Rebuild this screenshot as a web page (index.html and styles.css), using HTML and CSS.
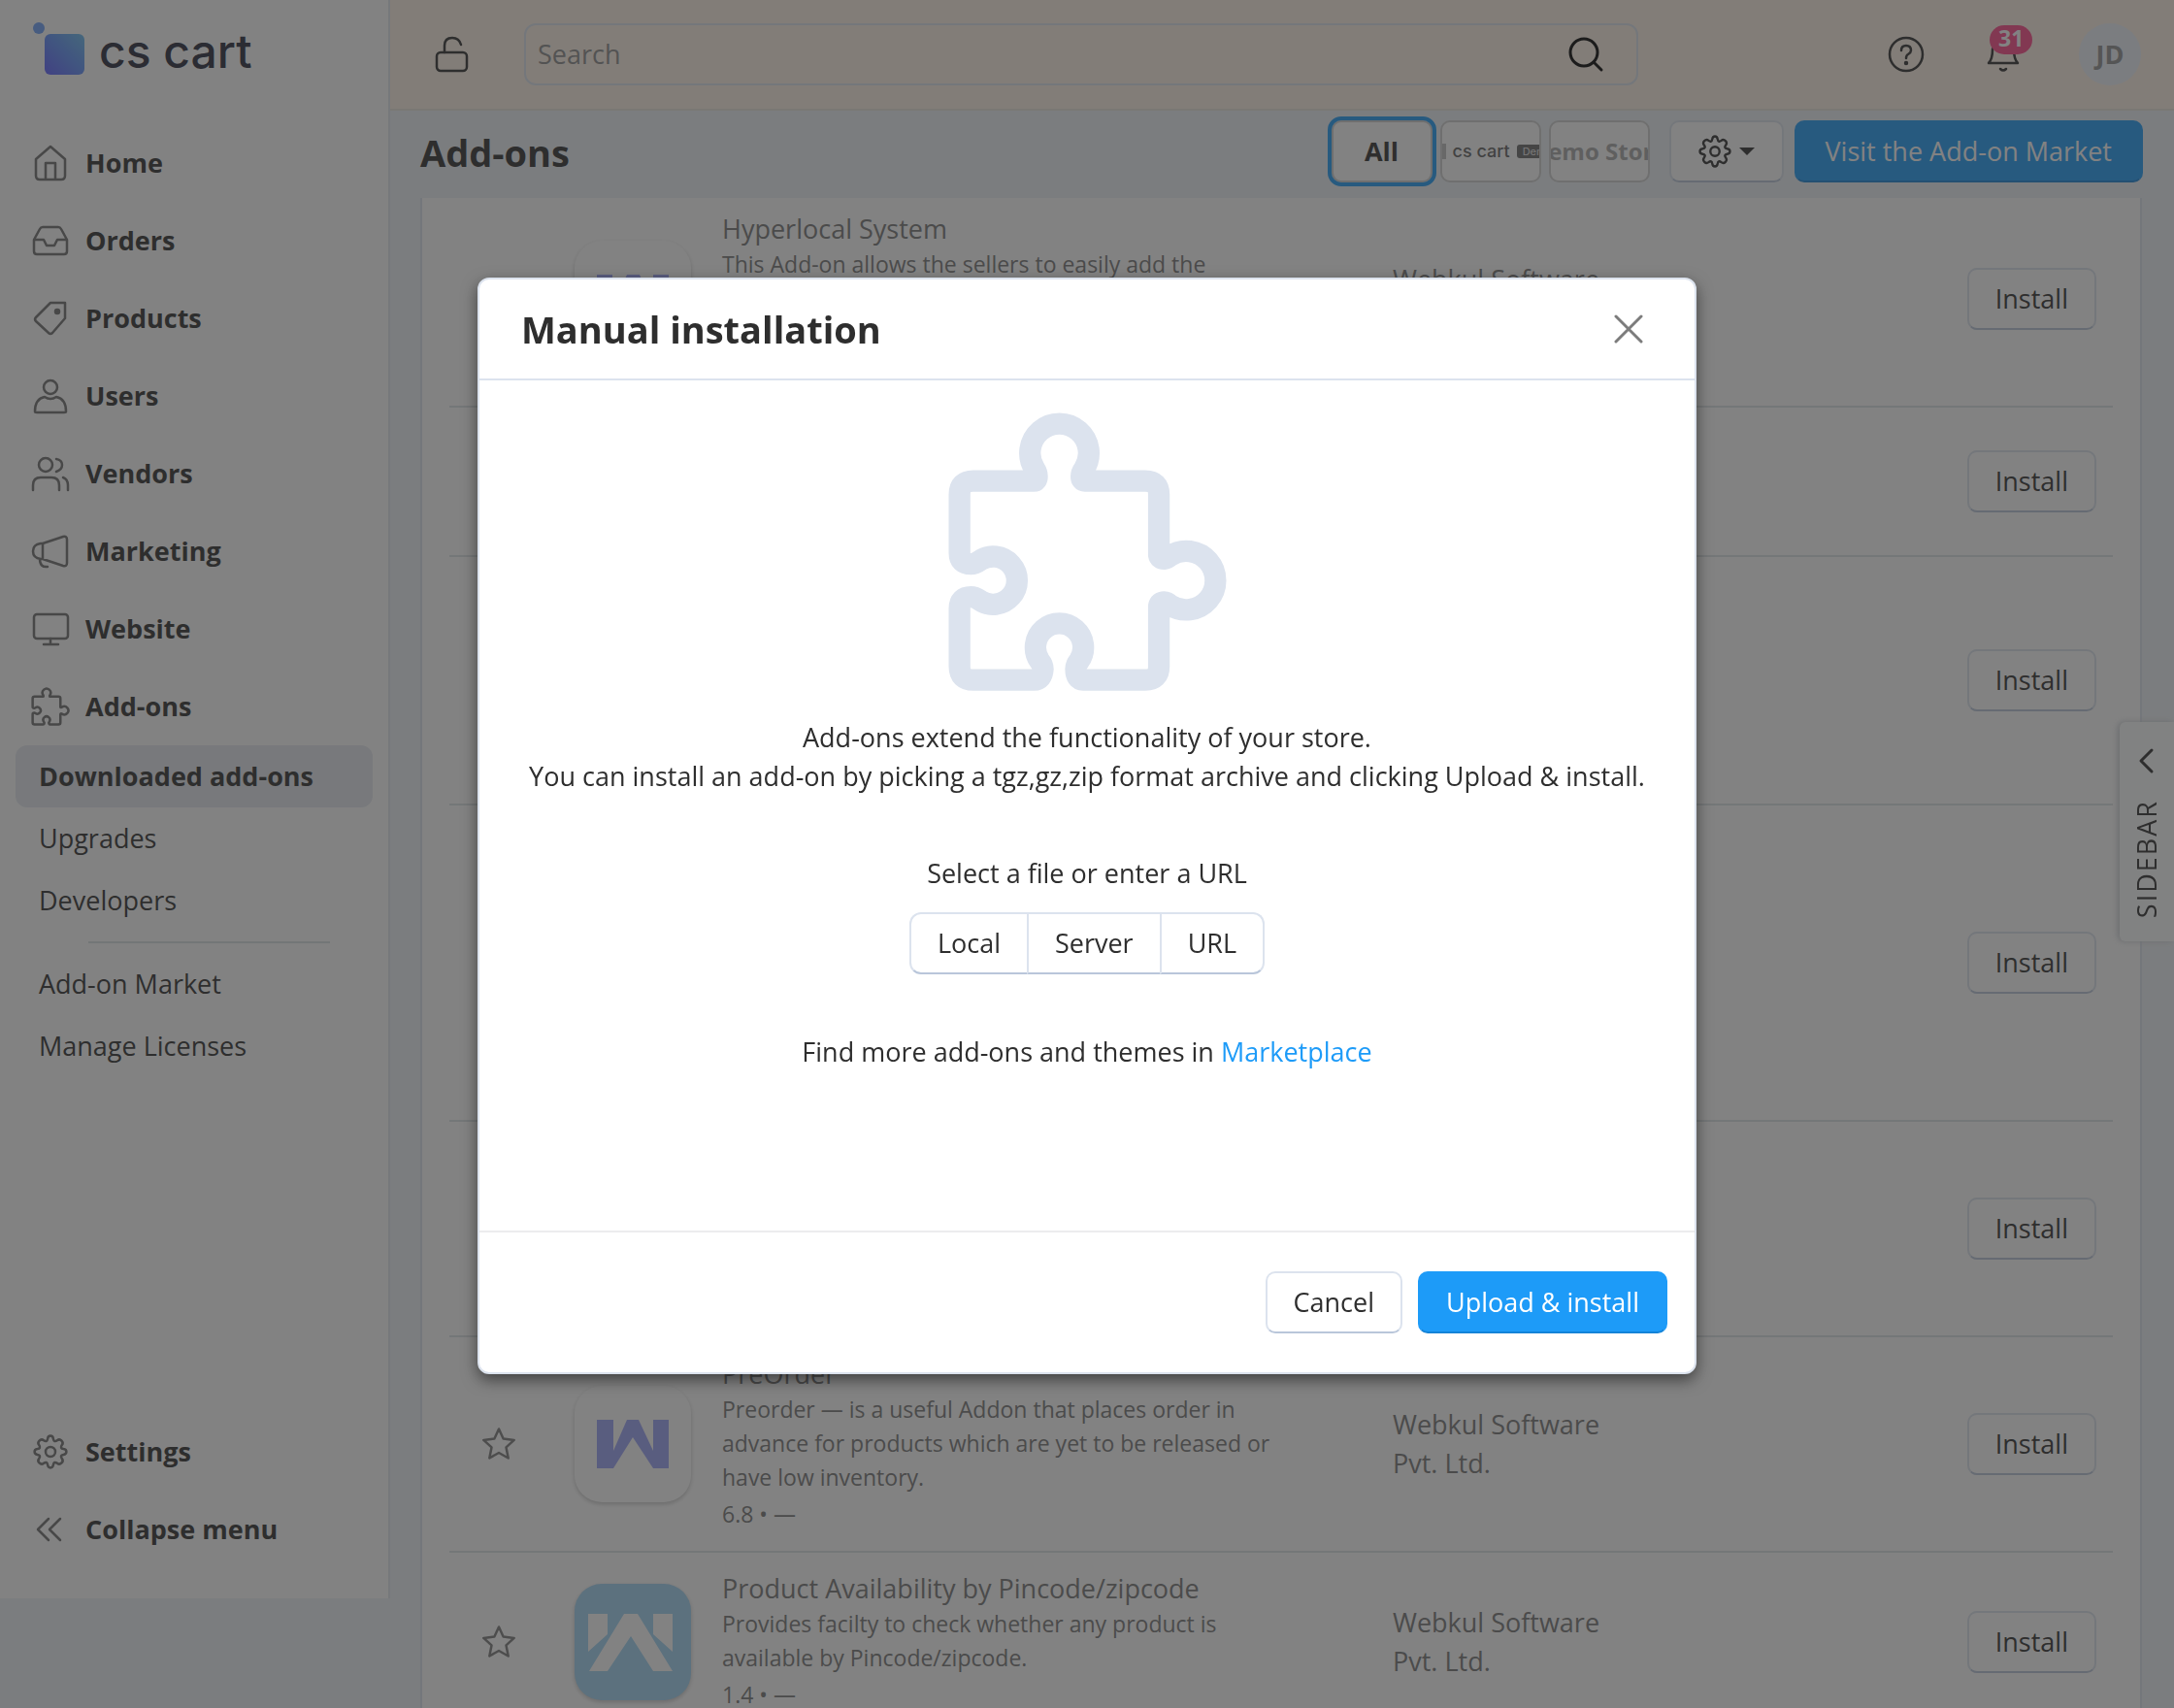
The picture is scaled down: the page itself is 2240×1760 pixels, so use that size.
FILE: index.html
```html
<!DOCTYPE html>
<html lang="en">
<head>
<meta charset="utf-8">
<meta name="viewport" content="width=device-width, initial-scale=1">
<title>Add-ons</title>
<link rel="stylesheet" href="styles.css">
</head>
<body>
<svg class="sprite" aria-hidden="true">
  <symbol id="puzzle" viewBox="233 74 860 862">
    <path d="M310 286H497Q507 286 507 272Q507 261 500 250A91 91 0 1 1 652 250Q644 261 644 272Q644 286 655 286H842Q884 286 884 328V515Q886 527 900 527Q910 526 918 518A91 91 0 1 1 918 670Q910 661 900 661Q886 661 884 674V860Q884 902 842 902H650Q627 902 627 868Q627 855 637 843A74 74 0 1 0 515 843Q525 855 525 868Q523 902 497 902H310Q267 902 267 860V680Q267 645 302 645Q315 645 329 655A74 74 0 1 0 329 533Q315 543 302 543Q267 543 267 510V328Q267 286 310 286Z"/>
  </symbol>
  <symbol id="gear" viewBox="0 0 36 36">
    <path d="M15.1 4.6C15.6 .6 20.4 .6 20.9 4.6C21.3 7.2 22.8 7.8 24.9 6.2C28.1 3.7 32.3 7.9 29.8 11.1C28.2 13.2 28.8 14.7 31.4 15.1C35.4 15.6 35.4 20.4 31.4 20.9C28.8 21.3 28.2 22.8 29.8 24.9C32.3 28.1 28.1 32.3 24.9 29.8C22.8 28.2 21.3 28.8 20.9 31.4C20.4 35.4 15.6 35.4 15.1 31.4C14.7 28.8 13.2 28.2 11.1 29.8C7.9 32.3 3.7 28.1 6.2 24.9C7.8 22.8 7.2 21.3 4.6 20.9C.6 20.4 .6 15.6 4.6 15.1C7.2 14.7 7.8 13.2 6.2 11.1C3.7 7.9 7.9 3.7 11.1 6.2C13.2 7.8 14.7 7.2 15.1 4.6Z"/>
    <circle cx="18" cy="18" r="5"/>
  </symbol>
  <symbol id="star" viewBox="0 0 36 36">
    <path d="M18 2.5L22.6 12.6L33.7 13.9L25.5 21.4L27.7 32.5L18 27L8.3 32.5L10.5 21.4L2.3 13.9L13.4 12.6Z"/>
  </symbol>
</svg>

<div class="shell">
  <aside class="sidebar">
    <a class="logo" href="#">
      <svg class="logo-mark" viewBox="0 0 66 56" aria-hidden="true">
        <defs><linearGradient id="mark" x1="0" y1="1" x2="1" y2="0"><stop offset="0" stop-color="#5e5cff"/><stop offset=".5" stop-color="#5c8dfa"/><stop offset="1" stop-color="#68bcee"/></linearGradient></defs>
        <circle cx="6" cy="7" r="6" fill="#6ba0fa"/><rect x="12" y="13" width="41" height="42" rx="6" fill="url(#mark)"/>
      </svg>
      <span>cs cart</span>
    </a>
    <nav class="menu">
      <a class="menu-item" href="#"><svg class="icon" viewBox="0 0 40 40"><path d="M5 16L20 3L35 16V33Q35 37 31 37H9Q5 37 5 33ZM15 37V20H25V37"/></svg>Home</a>
      <a class="menu-item" href="#"><svg class="icon" viewBox="0 0 40 40"><path d="M3 19L9 8Q10 6 12 6H28Q30 6 31 8L37 19V31Q37 34 34 34H6Q3 34 3 31ZM3 19H13L16 25H24L27 19H37"/></svg>Orders</a>
      <a class="menu-item" href="#"><svg class="icon" viewBox="0 0 40 40"><path d="M20 4H35V20L22 35Q20 37 18 35L5 23Q3 21 5 19Z"/><circle class="dot" cx="27" cy="13" r="2"/></svg>Products</a>
      <a class="menu-item" href="#"><svg class="icon" viewBox="0 0 40 40"><circle cx="20" cy="11" r="7"/><path d="M4 36Q4 23 14 21Q20 25 26 21Q36 23 36 36Q36 37 34 37H6Q4 37 4 36Z"/></svg>Users</a>
      <a class="menu-item" href="#"><svg class="icon" viewBox="0 0 40 40"><circle cx="15" cy="11" r="7"/><path d="M2 37V32Q2 24 10 24H21Q29 24 29 32V37M26 5Q32 6 32 11Q32 16 26 18M33 24Q38 26 38 32V37"/></svg>Vendors</a>
      <a class="menu-item" href="#"><svg class="icon" viewBox="0 0 40 40"><path d="M12 12L33 5Q37 4 37 8V32Q37 36 33 35L12 28H10Q2 27 2 20Q2 13 10 12ZM12 12V28M9 28Q9 37 17 36"/></svg>Marketing</a>
      <a class="menu-item" href="#"><svg class="icon" viewBox="0 0 40 40"><rect x="3" y="5" width="35" height="25" rx="3"/><path d="M20 30V36M13 36H28"/></svg>Website</a>
      <a class="menu-item" href="#"><svg class="icon icon-puzzle"><use href="#puzzle"/></svg>Add-ons</a>
      <div class="submenu">
        <a class="active" href="#">Downloaded add-ons</a>
        <a href="#">Upgrades</a>
        <a href="#">Developers</a>
        <hr>
        <a href="#">Add-on Market</a>
        <a href="#">Manage Licenses</a>
      </div>
    </nav>
    <div class="menu menu-bottom">
      <a class="menu-item" href="#"><svg class="icon icon-gear"><use href="#gear"/></svg>Settings</a>
      <a class="menu-item" href="#"><svg class="icon" viewBox="0 0 40 40"><path d="M18 9L7 20L18 31M30 9L19 20L30 31"/></svg>Collapse menu</a>
    </div>
  </aside>

  <div class="page">
    <header class="topbar">
      <button class="icon-button" aria-label="Store access"><svg class="icon" viewBox="0 0 40 40"><rect x="4" y="18" width="31" height="19" rx="4"/><path d="M12 18V11Q12 3 20 3Q27 3 29 10"/></svg></button>
      <div class="search">
        <input type="search" placeholder="Search" aria-label="Search">
        <svg class="icon" viewBox="0 0 40 40" aria-hidden="true"><circle cx="18" cy="18" r="14"/><path d="M28 28L36 36"/></svg>
      </div>
      <div class="topbar-actions">
        <button class="icon-button" aria-label="Help"><svg class="icon" viewBox="0 0 40 40"><circle cx="20" cy="20" r="17"/><path d="M15 16Q15 11 20 11Q25 11 25 16Q25 18 22 20Q20 21 20 24"/><circle class="dot" cx="20" cy="29" r="1"/></svg></button>
        <button class="icon-button bell" aria-label="Notifications"><svg class="icon" viewBox="0 0 40 40"><path d="M5 29H35Q31 25 31 15Q30 6 20 5Q10 6 9 15Q9 25 5 29ZM17 35Q20 38 23 35"/></svg><span class="badge">31</span></button>
        <button class="avatar">JD</button>
      </div>
    </header>

    <main class="content">
      <div class="toolbar">
        <h1>Add-ons</h1>
        <div class="stores">
          <button class="store selected">All</button>
          <button class="store store-logo"><span class="swatch"></span><span>cs cart</span><span class="tag">Demo</span></button>
          <button class="store store-demo">Demo Store</button>
        </div>
        <button class="button tools" aria-label="Tools"><svg class="icon icon-gear"><use href="#gear"/></svg><span class="caret"></span></button>
        <a class="button primary" href="#">Visit the Add-on Market</a>
      </div>

      <section class="card">
        <table class="addons">
          <colgroup><col class="col-star"><col class="col-icon"><col class="col-text"><col class="col-dev"><col></colgroup>
          <tbody>
            <tr class="lines-3">
              <td></td>
              <td><svg class="addon-icon" viewBox="0 0 120 120"><path class="w" d="M23 35H39V67L54 35H67L81 67V35H97V85H81L60 56L39 85H23Z"/></svg></td>
              <td><div class="about"><h2>Hyperlocal System</h2><p>This Add-on allows the sellers to easily add the</p></div></td>
              <td><div class="developer">Webkul Software Pvt. Ltd.</div></td>
              <td><button class="button">Install</button></td>
            </tr>
            <tr class="lines-1"><td colspan="5"><button class="button">Install</button></td></tr>
            <tr class="lines-4"><td colspan="5"><button class="button">Install</button></td></tr>
            <tr class="lines-6"><td colspan="5"><button class="button">Install</button></td></tr>
            <tr class="lines-3"><td colspan="5"><button class="button">Install</button></td></tr>
            <tr class="lines-3">
              <td><svg class="star"><use href="#star"/></svg></td>
              <td><svg class="addon-icon" viewBox="0 0 120 120"><path class="w" d="M23 35H40V67L54 35H66L81 67V35H97V85H81L60 53L40 85H23Z"/></svg></td>
              <td><div class="about"><h2>PreOrder</h2><p>Preorder — is a useful Addon that places order in advance for products which are yet to be released or have low inventory.</p><p class="version">6.8 • —</p></div></td>
              <td><div class="developer">Webkul Software Pvt. Ltd.</div></td>
              <td><button class="button">Install</button></td>
            </tr>
            <tr class="lines-2">
              <td><svg class="star"><use href="#star"/></svg></td>
              <td><svg class="addon-icon blue" viewBox="0 0 120 120"><path d="M14 31H34V52L14 70ZM81 31H101V70L81 52ZM15 90L51 31H65L101 90H81L58 54L34 90Z"/></svg></td>
              <td><div class="about"><h2>Product Availability by Pincode/zipcode</h2><p>Provides facilty to check whether any product is available by Pincode/zipcode.</p><p class="version">1.4 • —</p></div></td>
              <td><div class="developer">Webkul Software Pvt. Ltd.</div></td>
              <td><button class="button">Install</button></td>
            </tr>
          </tbody>
        </table>
      </section>
    </main>
  </div>
</div>

<button class="drawer-tab"><svg class="icon" viewBox="0 0 40 40" aria-hidden="true"><path d="M25 9L14 20L25 31"/></svg><span>SIDEBAR</span></button>

<div class="backdrop">
  <div class="modal" role="dialog" aria-modal="true" aria-labelledby="modal-title">
    <div class="modal-header">
      <h2 id="modal-title">Manual installation</h2>
      <button class="close" aria-label="Close"><svg viewBox="0 0 30 30"><path d="M2 2L28 28M28 2L2 28"/></svg></button>
    </div>
    <div class="modal-body">
      <svg class="hero" aria-hidden="true"><use href="#puzzle"/></svg>
      <p>Add-ons extend the functionality of your store.<br>You can install an add-on by picking a tgz,gz,zip format archive and clicking Upload &amp; install.</p>
      <div class="source">
        <p id="source-label">Select a file or enter a URL</p>
        <div class="button-group" role="group" aria-labelledby="source-label">
          <button class="button">Local</button><button class="button">Server</button><button class="button">URL</button>
        </div>
      </div>
      <p>Find more add-ons and themes in <a href="#">Marketplace</a></p>
    </div>
    <div class="modal-footer">
      <button class="button">Cancel</button>
      <button class="button primary">Upload &amp; install</button>
    </div>
  </div>
</div>
</body>
</html>
```
FILE: styles.css
```css
:root {
  --ink: #2e2e2e;
  --muted: #767676;
  --line: #dce3ee;
  --line-strong: #b9c6da;
  --page: #eef3f7;
  --blue: #1d9bf8;
}

* { box-sizing: border-box; }

body {
  margin: 0;
  background: var(--page);
  color: var(--ink);
  font: 27px/40px "Open Sans", "Noto Sans", sans-serif;
}

h1, h2, p { margin: 0; }
a { color: inherit; text-decoration: none; }
button, input { font: inherit; color: inherit; }
button { border: 0; padding: 0; background: none; }

.sprite { position: absolute; width: 0; height: 0; }

.icon {
  flex: none;
  width: 40px;
  height: 40px;
  fill: none;
  stroke: currentColor;
  stroke-width: 2.5;
  stroke-linecap: round;
  stroke-linejoin: round;
}
.icon .dot { fill: currentColor; }
.icon-gear { width: 36px; height: 36px; }

.shell {
  display: flex;
  align-items: flex-start;
  height: 100vh;
  overflow: hidden;
}

/* Sidebar */
.sidebar {
  display: flex;
  flex-direction: column;
  flex: none;
  width: 402px;
  height: calc(100vh - 113px);
  padding-bottom: 31px;
  border-right: 2px solid #e2e6ee;
  background: #fff;
}
.logo {
  display: flex;
  align-items: flex-start;
  gap: 2px;
  height: 128px;
  padding: 22px 34px;
  color: #26283a;
  font: 500 48px/62px Inter, sans-serif;
}
.logo-mark { width: 66px; height: 56px; }
.menu-item {
  display: flex;
  align-items: center;
  gap: 16px;
  height: 80px;
  padding-left: 32px;
  font-weight: 700;
}
.menu-item .icon { color: #6e6e6e; }
.menu-item .icon-puzzle { stroke-width: 54; }
.menu-item .icon-gear { margin: 0 2px; }
.menu-bottom { margin-top: auto; }
.submenu { padding: 0 16px; }
.submenu a {
  display: block;
  padding: 12px 24px;
  border-radius: 12px;
}
.submenu .active { background: #e5e9f0; font-weight: 700; }
.submenu hr {
  margin: 10px 44px 10px 75px;
  border: 0;
  border-top: 2px solid #d9e0e3;
}

/* Top bar */
.page { flex: 1; min-width: 0; }
.topbar {
  display: flex;
  align-items: center;
  gap: 50px;
  height: 114px;
  padding: 0 34px 0 40px;
  border-bottom: 2px solid #ece5dc;
  background: #fff3e7;
}
.icon-button {
  display: flex;
  align-items: center;
  justify-content: center;
  width: 48px;
  height: 48px;
}
.search {
  display: flex;
  align-items: center;
  flex: 0 1 1148px;
  height: 64px;
  padding: 0 32px 0 12px;
  border: 2px solid var(--line);
  border-radius: 12px;
}
.search input {
  flex: 1;
  min-width: 0;
  border: 0;
  padding: 0;
  background: none;
}
.search input::placeholder { color: #8a8a8a; }
.search .icon { color: #000; stroke-width: 3; }
.topbar-actions {
  display: flex;
  align-items: center;
  gap: 52px;
  margin-left: auto;
}
.topbar-actions .avatar { margin-left: 2px; }
.bell { position: relative; }
.badge {
  position: absolute;
  top: -6px;
  left: 10px;
  padding: 0 9px 3px;
  border-radius: 15px;
  background: #ff4788;
  color: #fff;
  font: 700 23px/27px "Open Sans", sans-serif;
}
.avatar {
  width: 64px;
  height: 64px;
  border-radius: 50%;
  background: #edf2fa;
  color: #8f8f8f;
  font-weight: 700;
}

/* Toolbar */
.toolbar {
  position: relative;
  z-index: 1;
  display: flex;
  align-items: flex-start;
  height: 90px;
  padding: 10px 32px 0 31px;
  background: var(--page);
}
.toolbar h1 { margin-right: auto; font-size: 38px; line-height: 66px; }
.stores { display: flex; gap: 8px; margin-right: 20px; }
.store {
  display: flex;
  align-items: center;
  justify-content: center;
  width: 104px;
  height: 64px;
  overflow: hidden;
  border: 2px solid #d0d0d0;
  border-radius: 10px;
  background: #fff;
  font-weight: 700;
  white-space: nowrap;
}
.store.selected { outline: 4px solid var(--blue); }
.store-logo { gap: 7px; color: #606060; font: 500 18px/20px Inter, sans-serif; }
.store-logo .swatch { flex: none; width: 24px; height: 16px; background: #bdbdbd; }
.store-logo .tag {
  flex: none;
  padding: 0 6px;
  border-radius: 3px;
  background: #666;
  color: #ddd;
  font-size: 11px;
  line-height: 14px;
}
.store-demo { color: #a8a8a8; font-size: 24px; }

.button {
  height: 64px;
  padding: 0 27px;
  border: 2px solid var(--line);
  border-bottom-color: var(--line-strong);
  border-radius: 10px;
  background: #fff;
  line-height: 60px;
  white-space: nowrap;
}
.button.primary {
  border-color: var(--blue);
  border-bottom-color: #1483d8;
  background: var(--blue);
  color: #fff;
}
.toolbar .primary { padding: 0 30px; }
.tools {
  display: flex;
  align-items: center;
  justify-content: center;
  gap: 8px;
  width: 118px;
  margin-right: 11px;
  padding: 0;
}
.tools .icon { width: 34px; height: 34px; }
.caret {
  border: 8px solid transparent;
  border-top-color: var(--ink);
  border-bottom-width: 0;
}

/* Add-on list */
.card {
  margin: -7px 33px 0 31px;
  padding: 0 28px;
  border: solid var(--line);
  border-width: 0 2px;
  background: #fff;
}
.addons {
  width: 100%;
  border-collapse: collapse;
  table-layout: fixed;
}
.col-star { width: 129px; }
.col-icon { width: 152px; }
.col-text { width: 691px; }
.col-dev { width: 320px; }
.addons td { padding: 0; border-bottom: 2px solid #dde3e6; }
.addons td:last-child { padding-right: 17px; text-align: right; }
.addons td svg { display: block; }
.lines-1 { height: 154px; }
.lines-2 { height: 186px; }
.lines-3 { height: 222px; }
.lines-4 { height: 256px; }
.lines-6 { height: 326px; }
.star {
  width: 36px;
  height: 36px;
  margin-left: 33px;
  fill: none;
  stroke: #7c7c7c;
  stroke-width: 2.5;
  stroke-linejoin: round;
}
.addon-icon {
  width: 120px;
  height: 120px;
  border-radius: 28px;
  background: #fff;
  box-shadow: 0 2px 4px #c8c8c8;
  fill: #fff;
}
.addon-icon .w { fill: #9aa2f8; }
.addon-icon.blue { background: #a0d4f5; }
.about { width: 590px; min-height: 182px; color: var(--muted); }
.lines-2 .about { min-height: 0; }
.about h2 { font-size: 27px; font-weight: 400; line-height: 38px; }
.about p { font-size: 23px; line-height: 35px; }
.about .version { line-height: 40px; }
.developer { width: 240px; color: var(--muted); }

/* Collapsed right drawer */
.drawer-tab {
  position: fixed;
  top: 744px;
  right: 0;
  display: flex;
  flex-direction: column;
  align-items: center;
  gap: 20px;
  width: 56px;
  height: 226px;
  padding-top: 20px;
  border-radius: 6px 0 0 6px;
  background: #fdfeff;
  box-shadow: -2px 0 6px #c8ccd2;
}
.drawer-tab .icon { stroke-width: 3; }
.drawer-tab span {
  writing-mode: vertical-rl;
  rotate: 180deg;
  letter-spacing: 2px;
}

/* Modal */
.backdrop {
  position: fixed;
  inset: 0;
  z-index: 10;
  display: flex;
  align-items: flex-start;
  justify-content: center;
  padding: 286px 24px 24px;
  background: rgb(46 46 46 / .6);
}
.modal {
  width: 1256px;
  border: 2px solid var(--line);
  border-radius: 12px;
  background: #fff;
  box-shadow: 0 6px 16px rgb(0 0 0 / .5);
}
.modal-header {
  display: flex;
  align-items: center;
  justify-content: space-between;
  padding: 29px 46px 29px 43px;
  border-bottom: 2px solid var(--line);
}
.modal-header h2 { font-size: 38px; line-height: 44px; }
.close { display: grid; place-items: center; width: 44px; height: 44px; }
.close svg {
  width: 30px;
  height: 30px;
  stroke: #7c7c7c;
  stroke-width: 3;
  stroke-linecap: round;
}
.modal-body {
  display: flex;
  flex-direction: column;
  align-items: center;
  gap: 60px;
  padding: 33px 24px 164px;
  text-align: center;
}
.hero {
  width: 287px;
  height: 287px;
  margin-bottom: -32px;
  fill: none;
  stroke: var(--line);
  stroke-width: 67;
}
.source { display: flex; flex-direction: column; align-items: center; gap: 20px; }
.modal-body a { color: var(--blue); }
.button-group { display: flex; }
.button-group .button { border-radius: 0; margin-left: -2px; }
.button-group .button:first-child { border-radius: 12px 0 0 12px; margin-left: 0; }
.button-group .button:last-child { border-radius: 0 12px 12px 0; }
.modal-footer {
  display: flex;
  justify-content: flex-end;
  gap: 16px;
  padding: 40px 28px;
  border-top: 2px solid #ececee;
}
```
